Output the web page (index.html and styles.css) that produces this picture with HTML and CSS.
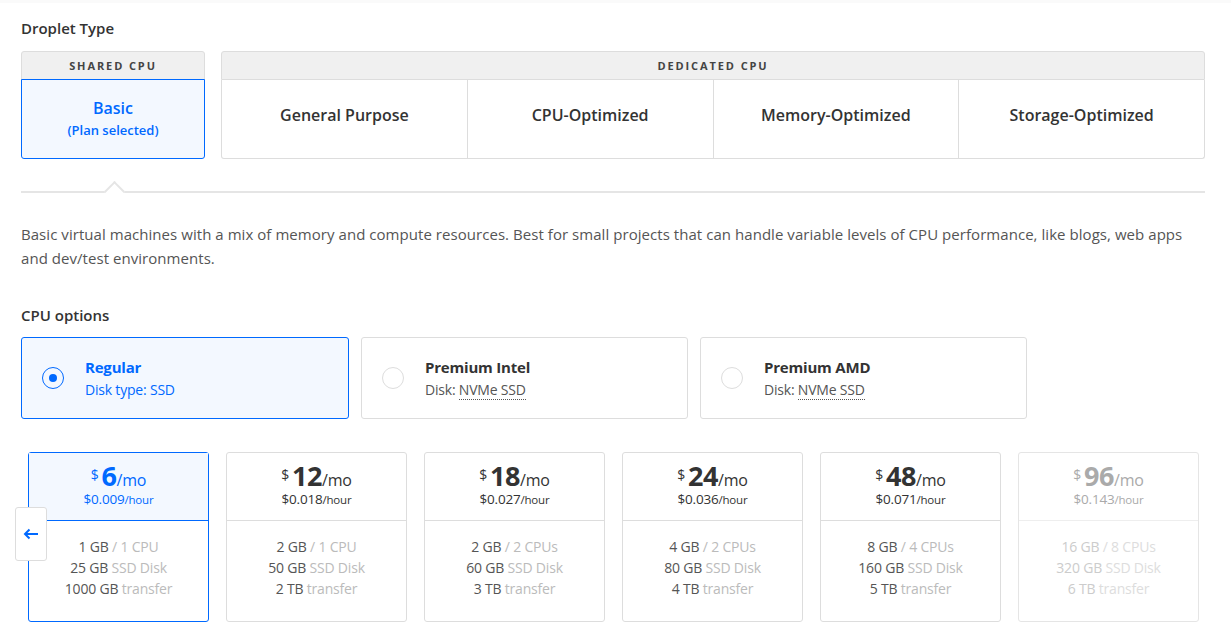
FILE: index.html
```html
<!DOCTYPE html>
<html lang="en">
<head>
  <meta charset="UTF-8">
  <meta name="viewport" content="width=device-width, initial-scale=1.0">
  <title>Create Droplet: Choose Size</title>
  <link rel="stylesheet" href="styles.css">
</head>
<body>
  <div class="topbar"></div>

  <main class="page">
    <h2 class="section-title">Droplet Type</h2>

    <div class="type-groups">
      <div class="type-group shared">
        <div class="group-head">Shared CPU</div>
        <div class="type-cells">
          <div class="type-cell selected">
            <span class="type-name">Basic</span>
            <span class="type-note">(Plan selected)</span>
          </div>
        </div>
      </div>

      <div class="type-group dedicated">
        <div class="group-head">Dedicated CPU</div>
        <div class="type-cells">
          <div class="type-cell"><span class="type-name">General Purpose</span></div>
          <div class="type-cell"><span class="type-name">CPU-Optimized</span></div>
          <div class="type-cell"><span class="type-name">Memory-Optimized</span></div>
          <div class="type-cell"><span class="type-name">Storage-Optimized</span></div>
        </div>
      </div>
    </div>

    <div class="divider"></div>

    <p class="description">Basic virtual machines with a mix of memory and compute resources. Best for small projects that can handle variable levels of CPU performance, like blogs, web apps and dev/test environments.</p>

    <h2 class="section-title cpu-title">CPU options</h2>

    <div class="cpu-options">
      <div class="cpu-card selected">
        <span class="radio"></span>
        <div class="cpu-text">
          <div class="cpu-name">Regular</div>
          <div class="cpu-disk">Disk type: SSD</div>
        </div>
      </div>
      <div class="cpu-card">
        <span class="radio"></span>
        <div class="cpu-text">
          <div class="cpu-name">Premium Intel</div>
          <div class="cpu-disk">Disk: <span class="dotted">NVMe SSD</span></div>
        </div>
      </div>
      <div class="cpu-card">
        <span class="radio"></span>
        <div class="cpu-text">
          <div class="cpu-name">Premium AMD</div>
          <div class="cpu-disk">Disk: <span class="dotted">NVMe SSD</span></div>
        </div>
      </div>
    </div>

    <div class="plans">
      <button class="scroll-left" aria-label="Previous plans">
        <svg width="16" height="12" viewBox="0 0 16 12"><path d="M15 6H2M6.5 1.5L2 6l4.5 4.5" fill="none" stroke="#0069ff" stroke-width="2"/></svg>
      </button>

      <div class="plan selected">
        <div class="plan-price">
          <div class="monthly"><span class="cur">$</span><span class="amount">6</span>/mo</div>
          <div class="hourly">$0.009<small>/hour</small></div>
        </div>
        <div class="plan-specs">
          <div>1 GB <span class="lbl">/ 1 CPU</span></div>
          <div>25 GB <span class="lbl">SSD Disk</span></div>
          <div>1000 GB <span class="lbl">transfer</span></div>
        </div>
      </div>

      <div class="plan">
        <div class="plan-price">
          <div class="monthly"><span class="cur">$</span><span class="amount">12</span>/mo</div>
          <div class="hourly">$0.018<small>/hour</small></div>
        </div>
        <div class="plan-specs">
          <div>2 GB <span class="lbl">/ 1 CPU</span></div>
          <div>50 GB <span class="lbl">SSD Disk</span></div>
          <div>2 TB <span class="lbl">transfer</span></div>
        </div>
      </div>

      <div class="plan">
        <div class="plan-price">
          <div class="monthly"><span class="cur">$</span><span class="amount">18</span>/mo</div>
          <div class="hourly">$0.027<small>/hour</small></div>
        </div>
        <div class="plan-specs">
          <div>2 GB <span class="lbl">/ 2 CPUs</span></div>
          <div>60 GB <span class="lbl">SSD Disk</span></div>
          <div>3 TB <span class="lbl">transfer</span></div>
        </div>
      </div>

      <div class="plan">
        <div class="plan-price">
          <div class="monthly"><span class="cur">$</span><span class="amount">24</span>/mo</div>
          <div class="hourly">$0.036<small>/hour</small></div>
        </div>
        <div class="plan-specs">
          <div>4 GB <span class="lbl">/ 2 CPUs</span></div>
          <div>80 GB <span class="lbl">SSD Disk</span></div>
          <div>4 TB <span class="lbl">transfer</span></div>
        </div>
      </div>

      <div class="plan">
        <div class="plan-price">
          <div class="monthly"><span class="cur">$</span><span class="amount">48</span>/mo</div>
          <div class="hourly">$0.071<small>/hour</small></div>
        </div>
        <div class="plan-specs">
          <div>8 GB <span class="lbl">/ 4 CPUs</span></div>
          <div>160 GB <span class="lbl">SSD Disk</span></div>
          <div>5 TB <span class="lbl">transfer</span></div>
        </div>
      </div>

      <div class="plan disabled">
        <div class="plan-price">
          <div class="monthly"><span class="cur">$</span><span class="amount">96</span>/mo</div>
          <div class="hourly">$0.143<small>/hour</small></div>
        </div>
        <div class="plan-specs">
          <div>16 GB <span class="lbl">/ 8 CPUs</span></div>
          <div>320 GB <span class="lbl">SSD Disk</span></div>
          <div>6 TB <span class="lbl">transfer</span></div>
        </div>
      </div>
    </div>
  </main>
</body>
</html>
```

FILE: styles.css
```css
/* Global */
body {
  margin: 0;
  background-color: #fff;
  color: #333;
  font-family: "Open Sans", "Liberation Sans", sans-serif;
}

.topbar {
  height: 3px;
  background-color: #fafafa;
}

.page {
  width: 1184px;
  padding: 15px 0 0 21px;
}

.section-title {
  margin: 0 0 13px;
  font-size: 15px;
  line-height: 20px;
  font-weight: 600;
  color: #333;
}

/* Droplet type */
.type-groups {
  display: flex;
  gap: 16px;
}

.type-group.shared {
  width: 184px;
}

.type-group.dedicated {
  flex: 1;
}

.group-head {
  height: 27px;
  line-height: 28px;
  border: 1px solid #ddd;
  border-radius: 3px 3px 0 0;
  background-color: #f0f0f0;
  text-align: center;
  font-size: 11px;
  font-weight: 700;
  letter-spacing: 1.9px;
  text-transform: uppercase;
  color: #444;
}

.type-cells {
  display: flex;
}

.type-cell {
  flex: 1;
  height: 79px;
  box-sizing: border-box;
  border: 1px solid #ddd;
  border-top: 0;
  padding-bottom: 8px;
  display: flex;
  flex-direction: column;
  align-items: center;
  justify-content: center;
}

.dedicated .type-cell + .type-cell {
  border-left: 0;
}

.dedicated .type-cell:first-child {
  border-bottom-left-radius: 3px;
}

.dedicated .type-cell:last-child {
  border-bottom-right-radius: 3px;
}

.type-cell.selected {
  margin-top: -1px;
  height: 80px;
  border: 1px solid #0069ff;
  border-radius: 0 0 3px 3px;
  background-color: #f3f8ff;
  padding-bottom: 2px;
}

.type-name {
  font-size: 16px;
  font-weight: 600;
  line-height: 20px;
  color: #333;
}

.type-cell.selected .type-name {
  color: #0069ff;
}

.type-note {
  margin-top: 3px;
  font-size: 13px;
  font-weight: 600;
  line-height: 18px;
  color: #0069ff;
}

.divider {
  position: relative;
  height: 2px;
  margin-top: 32px;
  background-color: #e5e5e5;
}

.divider::before {
  content: "";
  position: absolute;
  left: 86px;
  top: -7px;
  width: 13px;
  height: 13px;
  background-color: #fff;
  border-top: 2px solid #e5e5e5;
  border-left: 2px solid #e5e5e5;
  transform: rotate(45deg);
}

.description {
  margin: 29px 0 0;
  font-size: 15px;
  line-height: 24px;
  letter-spacing: 0.05px;
  color: #555;
}

.cpu-title {
  margin-top: 35px;
  margin-bottom: 12px;
}

/* CPU options */
.cpu-options {
  display: flex;
  gap: 12px;
}

.cpu-card {
  width: 327px;
  height: 82px;
  box-sizing: border-box;
  border: 1px solid #ddd;
  border-radius: 3px;
  display: flex;
  align-items: center;
  gap: 21px;
  padding-left: 20px;
}

.cpu-card.selected {
  width: 328px;
  border-color: #0069ff;
  background-color: #f3f8ff;
}

.radio {
  width: 20px;
  height: 20px;
  border: 1px solid #ddd;
  border-radius: 50%;
  background-color: #fff;
  position: relative;
  flex-shrink: 0;
}

.cpu-card.selected .radio {
  border-color: #0069ff;
  background-color: transparent;
}

.cpu-card.selected .radio::after {
  content: "";
  position: absolute;
  left: 6px;
  top: 6px;
  width: 8px;
  height: 8px;
  border-radius: 50%;
  background-color: #0069ff;
}

.cpu-name {
  font-size: 15px;
  font-weight: 700;
  line-height: 20px;
  letter-spacing: -0.2px;
  color: #333;
}

.cpu-disk {
  margin-top: 3px;
  font-size: 14px;
  line-height: 20px;
  letter-spacing: -0.2px;
  color: #555;
}

.cpu-card.selected .cpu-name,
.cpu-card.selected .cpu-disk {
  color: #0069ff;
}

.dotted {
  border-bottom: 1px dotted #555;
}

/* Plans */
.plans {
  position: relative;
  display: flex;
  gap: 17px;
  margin-top: 33px;
  padding-left: 7px;
}

.scroll-left {
  position: absolute;
  left: -6px;
  top: 55px;
  width: 32px;
  height: 54px;
  padding: 0;
  border: 1px solid #ddd;
  border-radius: 3px;
  background-color: #fff;
  display: flex;
  align-items: center;
  justify-content: center;
  cursor: pointer;
  z-index: 2;
}

.plan {
  width: 179px;
  height: 168px;
  border: 1px solid #ddd;
  border-radius: 3px;
  text-align: center;
  color: #555;
  letter-spacing: -0.2px;
}

.plan-price {
  height: 57px;
  padding-top: 10px;
  border-bottom: 1px solid #ddd;
  color: #333;
}

.monthly {
  font-size: 16px;
  line-height: 24px;
}

.cur {
  font-size: 14px;
  vertical-align: 6px;
  margin-right: 3px;
}

.amount {
  font-size: 27px;
  font-weight: 700;
  letter-spacing: -0.5px;
}

.hourly {
  font-size: 13.5px;
  line-height: 15px;
}

.hourly small {
  font-size: 11.5px;
}

.plan-specs {
  padding-top: 15px;
  font-size: 14px;
  line-height: 21px;
}

.lbl {
  color: #bbb;
}

.plan.selected {
  border-color: #0069ff;
}

.plan.selected .plan-price {
  background-color: #f3f8ff;
  border-bottom-color: #0069ff;
  color: #0069ff;
}

.plan.disabled {
  border-color: #e5e5e5;
  color: #ccc;
}

.plan.disabled .plan-price {
  border-bottom-color: #eee;
  color: #aaa;
}

.plan.disabled .lbl {
  color: #ddd;
}
```
